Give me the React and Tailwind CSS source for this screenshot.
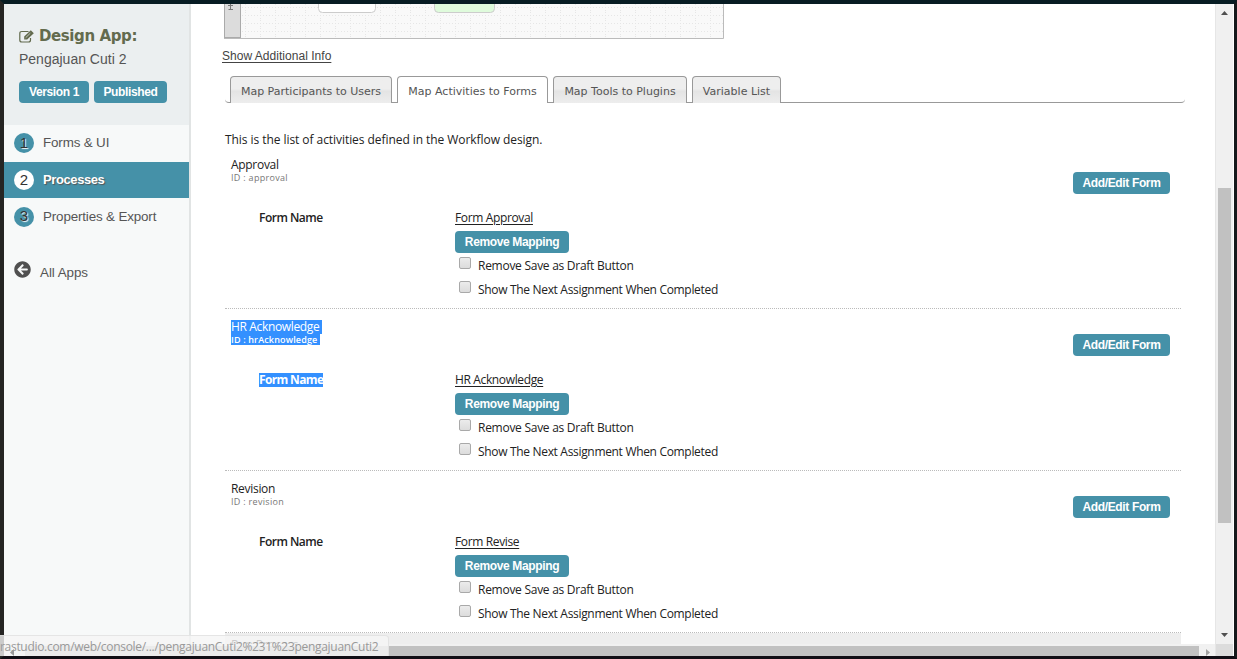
import React from "react";
import { FaArrowCircleLeft } from "react-icons/fa";

const activities = [
  { name: "Approval", id: "approval", form: "Form Approval" },
  { name: "HR Acknowledge", id: "hrAcknowledge", form: "HR Acknowledge", selected: true },
  { name: "Revision", id: "revision", form: "Form Revise" },
];

function Badge({ children, className }) {
  return (
    <span className={`flex h-[22px] items-center justify-center whitespace-nowrap rounded-[4px] bg-[#4591a8] pb-px font-['Liberation_Sans',sans-serif] text-[12px] font-bold tracking-[-0.36px] text-white ${className}`}>
      {children}
    </span>
  );
}

function Option({ children, className }) {
  return (
    <div className="flex h-6 items-start pl-1">
      <span className="h-[12px] w-[12px] shrink-0 rounded-[2px] border border-[#a9a9a9] bg-linear-to-b from-[#ececec] to-[#dcdcdc]" />
      <span className={`ml-[7px] mt-[1px] whitespace-nowrap leading-4 ${className}`}>{children}</span>
    </div>
  );
}

function Activity({ item }) {
  const mark = item.selected ? "bg-[#3390ff] text-white" : "";
  return (
    <section className="flex h-[162px] border-b border-dotted border-[#bbb] text-[#222]">
      <div className="w-[230px] shrink-0 pl-[6px] pt-[11px]">
        <div className="flex h-[14px] leading-[14px]">
          <span className={`whitespace-pre ${item.selected ? "tracking-[-0.35px]" : "tracking-[-0.3px]"} ${mark}`}>{item.name}{item.selected ? " " : ""}</span>
        </div>
        <div className="flex h-[11px] text-[9px] leading-[11px]">
          <span className={`whitespace-pre ${item.selected ? "bg-[#3390ff] font-semibold tracking-[0.15px] text-white" : "tracking-[0.3px] text-[#777]"}`}>ID : {item.id}{item.selected ? " " : ""}</span>
        </div>
        <div className="mt-[28px] flex pl-[28px] leading-[14px]">
          <span className={`${item.selected ? "font-bold tracking-[-0.65px]" : "font-semibold tracking-[-0.5px]"} ${mark}`}>Form Name</span>
        </div>
      </div>
      <div className="flex-1 pt-[63px]">
        <div className="h-[21px] leading-4 tracking-[-0.36px] underline underline-offset-2">{item.form}</div>
        <Badge className="mb-[4px] w-[114px]">Remove Mapping</Badge>
        <Option className="tracking-[-0.27px]">Remove Save as Draft Button</Option>
        <Option className="tracking-[-0.32px]">Show The Next Assignment When Completed</Option>
      </div>
      <div className="pr-[11px] pt-[25px]">
        <Badge className="w-[97px]">Add/Edit Form</Badge>
      </div>
    </section>
  );
}

function Tab({ active, className, children }) {
  return (
    <div className={`flex items-center justify-center whitespace-nowrap rounded-t-[4px] border border-b-0 border-[#999] text-[#555] ${active ? "h-[27px] bg-white pt-[4px]" : "h-[27px] border-b bg-linear-to-b from-[#eee] from-45% via-[#e4e4e4] via-55% to-[#ededed] pt-[5px]"} ${className}`}>
      {children}
    </div>
  );
}

function Rule({ className }) {
  return <span className={`h-[27px] border-b border-[#999] ${className}`} />;
}

function Step({ number, label, active }) {
  return (
    <div className={`flex items-center pl-[10px] text-[#555] ${active ? "h-[36px] bg-[#4591a8]" : "h-[37px]"}`}>
      <span className={`flex h-5 w-5 items-center justify-center rounded-full text-[15px] ${active ? "bg-white text-[#333]" : "bg-[#4591a8] text-[#333] [text-shadow:1px_1px_1px_white]"} ${number === "1" ? "-mt-px" : ""}`}>{number}</span>
      <span className={`ml-[9px] ${active ? "pb-px text-[13px] font-bold tracking-[-0.4px] text-white [text-shadow:1px_1px_1px_#555]" : "text-[13.4px] tracking-[-0.15px]"} ${number === "1" ? "-mt-px" : ""} ${number === "3" ? "pt-px" : ""}`}>{label}</span>
    </div>
  );
}

function Sidebar() {
  return (
    <aside className="w-[187px] shrink-0 border-r-2 border-[#e1e4e4] bg-[#f7f9f9] font-['Liberation_Sans',sans-serif]">
      <header className="h-[121px] bg-[#ebeff0] pl-[15px] pt-[23px]">
        <div className="flex h-[19px] items-center font-['DejaVu_Sans',sans-serif] text-[15px] font-bold text-[#636b4e]">
          <svg width="15" height="13" viewBox="0 0 15 13" fill="none" stroke="currentColor" strokeWidth="1.2">
            <path d="M9.500 1.500H2.800Q.8 1.500.8 3.500V10Q.8 12 2.800 12H9.500Q11.500 12 11.500 10V8" />
            <path d="M5.200 6.600 11.800.2 14.800 3.200 8.200 9.500H5.200Z" fill="currentColor" stroke="none" />
            <path d="M6.700 7.700 11.300 3.200" stroke="#ebeff0" strokeWidth=".7" />
          </svg>
          <span className="ml-[5px] whitespace-nowrap tracking-[-0.4px]">Design App:</span>
        </div>
        <div className="mt-[3px] h-5 whitespace-nowrap text-[14px] leading-5 text-[#555]">Pengajuan Cuti 2</div>
        <div className="mt-[12px] flex gap-[5px]">
          <Badge className="w-[70px]">Version 1</Badge>
          <Badge className="w-[73px]">Published</Badge>
        </div>
      </header>
      <nav>
        <Step number="1" label="Forms & UI" />
        <Step number="2" label="Processes" active />
        <Step number="3" label="Properties & Export" />
        <div className="mt-[26px] flex items-start pl-[10px] text-[13.4px] text-[#555]">
          <FaArrowCircleLeft size={17} color="#505050" />
          <span className="ml-[9px] mt-[4px] leading-4 tracking-[-0.05px]">All Apps</span>
        </div>
      </nav>
    </aside>
  );
}

function DiagramEdge() {
  return (
    <svg width="500" height="35" className="ml-[33px] block">
      <defs>
        <pattern id="grid" width="15" height="8" patternUnits="userSpaceOnUse">
          <path d="M0 3.500H15M6.500 0V8" stroke="#e6e6e6" strokeDasharray="1 2" />
        </pattern>
      </defs>
      <rect width="500" height="35" fill="#f9f9f9" />
      <rect x="17" width="483" height="35" fill="url(#grid)" shapeRendering="crispEdges" />
      <rect x="0.500" y="-1" width="16" height="34.500" fill="#dcdcdc" stroke="#aaa" />
      <path d="M6.500 0V5M4 1.500H9M4.500 5.500H9" stroke="#777" fill="none" />
      <rect x="94.500" y="-8" width="57" height="16.500" rx="4" fill="#fff" stroke="#ccc" />
      <rect x="210.500" y="-8" width="60" height="16.500" rx="4" fill="#dffbdc" stroke="#ccc" />
      <path d="M0 34.500H499.500V0" stroke="#bbb" fill="none" />
    </svg>
  );
}

function Content() {
  return (
    <main className="h-full min-w-0 flex-1 overflow-hidden bg-white">
      <DiagramEdge />
      <div className="ml-[31px] mt-[9px] h-4 font-['Liberation_Sans',sans-serif] text-[12px] leading-4 tracking-[0.03px] text-[#444] underline underline-offset-2">Show Additional Info</div>
      <div className="ml-[34px] mt-[12px] flex h-[27px] w-[960px] items-start font-['DejaVu_Sans',sans-serif] text-[11px]">
        <Rule className="w-[5px] rounded-bl-[4px]" />
        <Tab className="w-[162px]">Map Participants to Users</Tab>
        <Rule className="w-[5px]" />
        <Tab active className="w-[151px]">Map Activities to Forms</Tab>
        <Rule className="w-[5px]" />
        <Tab className="w-[134px]">Map Tools to Plugins</Tab>
        <Rule className="w-[5px]" />
        <Tab className="w-[89px]">Variable List</Tab>
        <Rule className="flex-1 rounded-br-[4px]" />
      </div>
      <div className="ml-[34px] w-[956px] font-['Open_Sans','Noto_Sans',sans-serif] text-[12px] tracking-[-0.1px] text-[#222]">
        <p className="h-[44px] pt-[29px] leading-4 tracking-[-0.06px]">This is the list of activities defined in the Workflow design.</p>
        {activities.map((item) => <Activity key={item.id} item={item} />)}
        <div className="h-3 bg-[#eee] pl-[6px] pt-[5px] leading-[14px]">Run Process</div>
      </div>
    </main>
  );
}

export default function App() {
  return (
    <div className="relative flex h-[659px] w-[1237px] border-b-[3px] border-l-[4px] border-r-[3px] border-t-[4px] border-b-[#100d14] border-l-[#252523] border-r-[#15191b] border-t-[#071c23] bg-white">
      <div className="flex min-w-0 flex-1 flex-col">
        <div className="flex h-[640px] overflow-hidden">
          <Sidebar />
          <Content />
        </div>
        <div className="flex h-3 items-end bg-[#f1f1f1] pl-[21px]">
          <span className="h-[10px] w-[1174px] bg-[#c1c1c1]" />
          <svg width="16" height="12"><path d="M7 5V12L11 8.500Z" fill="#a3a3a3" /></svg>
        </div>
      </div>
      <div className="flex w-[18px] flex-col items-center border-l border-[#e6e6e6] bg-[#f0f0f0]">
        <svg width="17" height="184" className="shrink-0"><path d="M5 11H12L8.500 7Z" fill="#505050" /></svg>
        <span className="h-[335px] w-[13px] shrink-0 bg-[#c1c1c1]" />
        <svg width="17" height="121" className="shrink-0"><path d="M5 110H12L8.500 114Z" fill="#505050" /></svg>
        <span className="h-3 w-[17px] shrink-0 bg-[#dcdcdc]" />
      </div>
      <div className="w-px bg-white" />
      <div className="absolute -left-1 bottom-0 h-[21px] w-[389px] whitespace-nowrap rounded-tr-[4px] border-r border-t border-[#ddd]/70 bg-[#f5f5f5]/80 font-['Open_Sans','Noto_Sans',sans-serif] text-[12px] leading-[21px] tracking-[-0.3px] text-[#999]">
        rastudio.com/web/console/.../pengajuanCuti2%231%23pengajuanCuti2
        <svg width="6" height="7" className="absolute bottom-0 left-[9px]"><path d="M5 0V7L1 3.500Z" fill="#999" /></svg>
      </div>
    </div>
  );
}
